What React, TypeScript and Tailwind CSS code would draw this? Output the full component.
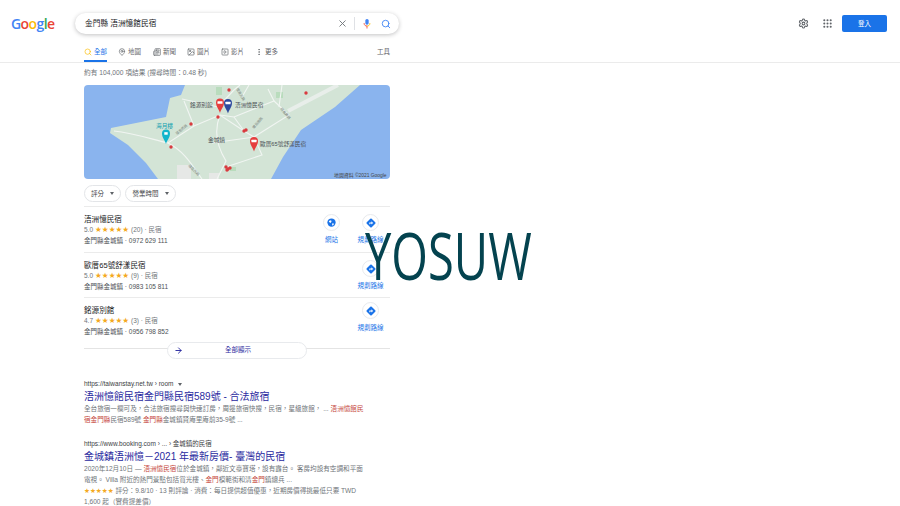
import { ArrowRight, EllipsisVertical, Grip, Image, MapPin, Newspaper, Search, Settings, SquarePlay, X } from "lucide-react";

const cjk = { fontFamily: '"Liberation Sans", "Noto Sans CJK TC", sans-serif' };

const tabs = [
  { label: "地圖", icon: <MapPin size={8} />, width: "w-[35px]" },
  { label: "新聞", icon: <Newspaper size={8} />, width: "w-[34px]" },
  { label: "圖片", icon: <Image size={8} />, width: "w-[34px]" },
  { label: "影片", icon: <SquarePlay size={8} />, width: "w-[34px]" },
  { label: "更多", icon: <EllipsisVertical size={8} />, width: "w-[25px]" },
];

const places = [
  { name: "浯洲憶民宿", score: "5.0", count: "(20)", phone: "0972 629 111", site: true, h: "h-[46px]", iconTop: "mt-[0px]" },
  { name: "歐厝65號舒漾民宿", score: "5.0", count: "(9)", phone: "0983 105 811", site: false, h: "h-[45px]", iconTop: "mt-[0px]" },
  { name: "銘源別館", score: "4.7", count: "(3)", phone: "0956 798 852", site: false, h: "h-[44px]", iconTop: "-mt-[3px]" },
];

function Caret() {
  return <span className="inline-block border-x-[2.5px] border-t-[3px] border-x-transparent border-t-[#5f6368]" />;
}

function Pin({ x, y, color, teal }: { x: number; y: number; color: string; teal?: boolean }) {
  return (
    <g transform={`translate(${x} ${y}) scale(0.85)`}>
      <path d="M0 9.500C-1 5-4.700 2-4.700-3A4.700 4.700 0 0 1 4.700-3C4.700 2 1 5 0 9.500Z" fill={color} />
      {teal ? <rect x="-2" y="-4.500" width="4" height="3" fill="#fff" /> : <rect x="-3" y="-4.500" width="6" height="3" rx="0.6" fill="#fff" />}
    </g>
  );
}

function MapTile() {
  const dots = [[222, 8], [145, 5], [134, 32], [107, 39], [160, 46], [162, 45], [87, 62], [142, 82], [144, 84], [146, 83], [143, 85]];
  const label = { fontSize: 5.7, fill: "#4a4f54" };
  const road = { fontSize: 3.5, fill: "#7b857e" };
  return (
    <svg viewBox="0 0 306 94" className="block w-[306px] h-[94px] rounded-[4px]" style={cjk}>
      <rect width="306" height="94" fill="#8ab4ee" />
      <path d="M101 0L97 10L86 13L82 32L57 37L27 43L26 48L44 60L62 78L74 94H187L199 72L217 45L251 22L276 0Z" fill="#d3e4d6" />
      <path d="M132 2h6v8h-6zM192 7h7v6h-7zM146 82h6v4h-6z" fill="#b9dcbd" />
      <path d="M93 80h14v14H93zM125 88h10v6h-10z" fill="#e6e8e6" />
      <g fill="none" stroke="#f1f5f2" strokeWidth="1.100">
        <path d="M30 46C50 48 70 55 84 58L110 41L136 30L160 46L170 52" />
        <path d="M84 58C100 66 108 80 118 94" />
        <path d="M136 30C130 45 132 60 142 76L133 94" />
        <path d="M98 14L134 22L150 5L156 0" />
        <path d="M128 58L170 52L178 70L142 82" />
        <path d="M136 30L150 32L190 16L205 30L170 52" />
        <path d="M190 16L184 4M100 16L110 41M150 32L160 46M195 22L198 0M165 0L158 12" />
      </g>
      <path d="M204 26L254 0" stroke="#e8eeea" strokeWidth="4" fill="none" />
      <text transform="translate(93 50) rotate(-40)" {...road}>環島西路</text>
      <text transform="translate(170 44) rotate(-50)" {...road}>環島南路</text>
      <text transform="translate(152 4) rotate(60)" {...road}>環島北路</text>
      <text transform="translate(196 24) rotate(50)" {...road}>環島東路</text>
      <text transform="translate(104 81) rotate(45)" {...road}>環島西路</text>
      {dots.map(([x, y]) => (
        <circle key={`${x}-${y}`} cx={x} cy={y} r="1.700" fill="#d93a3f" />
      ))}
      <Pin x={136} y={20} color="#e53e3e" />
      <Pin x={144} y={20.5} color="#2f4a9e" />
      <Pin x={170} y={58.5} color="#e53e3e" />
      <Pin x={82} y={51} color="#12b5cb" teal />
      <text x="106" y="22" {...label}>銘源別館</text>
      <text x="151" y="22" {...label}>浯洲憶民宿</text>
      <text x="72" y="43" fontSize="5.700" fill="#129eaf">海月樓</text>
      <text x="124" y="57" {...label}>金城鎮</text>
      <text x="176" y="61" {...label}>歐厝65號舒漾民宿</text>
      <text x="250" y="92" fontSize="4.900" fill="#444">地圖資料 ©2021 Google</text>
    </svg>
  );
}

function ActionIcon({ kind, label }: { kind: "site" | "route"; label: string }) {
  return (
    <div className="w-[39px] flex flex-col items-center">
      <div className="w-[17px] h-[17px] rounded-full bg-white border border-[#e8eaed] flex items-center justify-center">
        {kind === "site" ? (
          <svg viewBox="0 0 12 12" className="w-[9px] h-[9px]">
            <circle cx="6" cy="6" r="5.500" fill="#1a73e8" />
            <path d="M3 3.500L5.500 3L6 5L4.500 6.500L2.500 5ZM7 7L9.500 7.500L8 10L6.800 9.500Z" fill="#fff" />
          </svg>
        ) : (
          <svg viewBox="0 0 12 12" className="w-[10px] h-[10px]">
            <rect x="1.800" y="1.800" width="8.400" height="8.400" rx="1.200" transform="rotate(45 6 6)" fill="#1a73e8" />
            <path d="M4 7.500V5.500H6.500V4L8.500 6L6.500 7.800V6.500H5V7.500Z" fill="#fff" />
          </svg>
        )}
      </div>
      <span className="mt-[4px] text-[6.500px] leading-[9px] text-[#1a73e8] whitespace-nowrap">{label}</span>
    </div>
  );
}

function PlaceRow({ p }: { p: (typeof places)[number] }) {
  return (
    <div className={`flex justify-between border-t border-[#ebebeb] pt-[7px] ${p.h}`}>
      <div>
        <div className="text-[7.600px] leading-[11px] text-[#202124]">{p.name}</div>
        <div className="text-[6.500px] leading-[10px] text-[#70757a] flex items-center gap-[2px]">
          <span>{p.score}</span>
          <span className="text-[#f4a921] text-[7.600px]" style={{ fontFamily: '"DejaVu Sans", sans-serif' }}>★★★★★</span>
          <span>{p.count} · 民宿</span>
        </div>
        <div className="text-[6.500px] leading-[11px] text-[#4d5156]">金門縣金城鎮 · {p.phone}</div>
      </div>
      <div className={`flex items-start ${p.iconTop}`}>
        {p.site && <ActionIcon kind="site" label="網站" />}
        <ActionIcon kind="route" label="規劃路線" />
      </div>
    </div>
  );
}

function Hit({ children, url, title }: { children: React.ReactNode; url: React.ReactNode; title: string }) {
  return (
    <div>
      <div className="text-[6.500px] leading-[10px] text-[#3c4043] flex items-center gap-[3px]">{url}</div>
      <div className="mt-[1px] text-[10px] leading-[14px] text-[#2a2aa0] whitespace-nowrap">{title}</div>
      <div className="w-[282px] text-[6.600px] leading-[10.700px] text-[#70757a]">{children}</div>
    </div>
  );
}

export default function App() {
  return (
    <div className="relative w-[900px] h-[506px] overflow-hidden bg-white" style={cjk}>
      <header className="h-[46px] flex items-center pt-[1px]">
        <div className="w-[75px] pl-[11px] text-[14px] font-semibold tracking-[-0.6px]" style={{ fontFamily: '"Open Sans", sans-serif' }}>
          <span className="text-[#4285f4]">G</span>
          <span className="text-[#ea4335]">o</span>
          <span className="text-[#fbbc05]">o</span>
          <span className="text-[#4285f4]">g</span>
          <span className="text-[#34a853]">l</span>
          <span className="text-[#ea4335]">e</span>
        </div>
        <div className="w-[324px] h-[21px] rounded-full bg-white shadow-[0_1px_4px_rgba(32,33,36,0.28)] flex items-center pl-[10px] pr-[8px]">
          <span className="flex-1 text-[7.700px] text-[#202124]">金門縣 浯洲憶館民宿</span>
          <X size={11} strokeWidth={2} className="text-[#70757a]" />
          <span className="w-px h-[13px] bg-[#dfe1e5] ml-[6px] mr-[7px]" />
          <svg viewBox="0 0 12 12" className="w-[10px] h-[11px] mr-[9px]">
            <rect x="4" y="0.500" width="4" height="7" rx="2" fill="#4285f4" />
            <path d="M2.500 5.500C2.500 8 4 9 6 9V12" fill="none" stroke="#ea4335" strokeWidth="1" />
            <path d="M9.500 5.500C9.500 8 8 9 6 9" fill="none" stroke="#fbbc05" strokeWidth="1" />
          </svg>
          <Search size={10} strokeWidth={2.200} className="text-[#4285f4]" />
        </div>
        <div className="ml-auto flex items-center pr-[13px]">
          <Settings size={11} strokeWidth={2.200} className="text-[#5f6368]" />
          <Grip size={11} strokeWidth={2.500} className="text-[#5f6368] ml-[13px]" />
          <div className="ml-[9px] w-[45px] h-[17px] rounded-[2px] bg-[#1a73e8] text-white text-[6.500px] flex items-center justify-center">登入</div>
        </div>
      </header>

      <nav className="h-[17px] border-b border-[#ebebeb] pl-[84px] pr-[510px] flex items-start text-[6.500px] text-[#5f6368]">
        <div className="w-[23px] shrink-0 h-[16px] border-b-2 border-[#1a73e8] text-[#1a73e8] flex items-start pt-[1px] gap-[2px] leading-[10px] mr-[11px] whitespace-nowrap">
          <Search size={8} className="text-[#fbbc05] mt-[1px] shrink-0" />
          <span>全部</span>
        </div>
        {tabs.map((t) => (
          <div key={t.label} className={`${t.width} flex items-start pt-[1px] gap-[2px] leading-[10px] whitespace-nowrap`}>
            <span className="mt-[1px]">{t.icon}</span>
            <span>{t.label}</span>
          </div>
        ))}
        <span className="ml-auto pt-[1px] leading-[10px]">工具</span>
      </nav>

      <main className="ml-[84px] w-[306px]">
        <div className="mt-[5px] h-[17px] text-[6.700px] leading-[10px] text-[#70757a]">約有 104,000 項結果 (搜尋時間：0.48 秒)</div>
        <MapTile />
        <div className="mt-[6px] flex gap-[4px] text-[6.500px] text-[#3c4043]">
          <div className="h-[17px] w-[37px] rounded-full border border-[#e3e5e8] flex items-center justify-center gap-[6px]">評分 <Caret /></div>
          <div className="h-[17px] w-[51px] rounded-full border border-[#e3e5e8] flex items-center justify-center gap-[6px]">營業時間 <Caret /></div>
        </div>
        <div className="mt-[4px]">
          {places.map((p) => (
            <PlaceRow key={p.name} p={p} />
          ))}
        </div>
        <div className="h-[18px] flex items-center relative">
          <div className="absolute left-0 right-0 top-[7px] h-px bg-[#e4e4e4]" />
          <div className="relative ml-[83px] w-[140px] h-[17px] rounded-full bg-white border border-[#e8eaed] flex items-center pl-[6px]">
            <ArrowRight size={9} strokeWidth={2.500} className="text-[#2a2aa0]" />
            <span className="ml-[42px] text-[6.500px] text-[#2a2aa0]">全部顯示</span>
          </div>
        </div>

        <div className="mt-[20px]">
          <Hit
            url={<>https://taiwanstay.net.tw › room <span className="ml-[2px]"><Caret /></span></>}
            title="浯洲憶館民宿金門縣民宿589號 - 合法旅宿"
          >
            全台旅宿一欄可及，合法旅宿搜尋與快速訂房，周邊旅宿快搜，民宿，星級旅館， ... <span className="text-[#c5453a]">浯洲憶館民宿金門縣</span>民宿589號 <span className="text-[#c5453a]">金門縣</span>金城鎮賢庵里庵前35-9號 ...
          </Hit>
        </div>
        <div className="mt-[14px]">
          <Hit url={<>https://www.booking.com › ... › 金城鎮的民宿</>} title="金城鎮浯洲憶－2021 年最新房價- 臺灣的民宿">
            2020年12月10日 — <span className="text-[#c5453a]">浯洲憶民宿</span>位於金城鎮，鄰近文臺寶塔，設有露台。 客房均設有空調和平面電視。 Villa 附近的熱門景點包括賞光樓、<span className="text-[#c5453a]">金門</span>模範街和清<span className="text-[#c5453a]">金門</span>鎮總兵 ...
            <br />
            <span className="text-[#f4a921]" style={{ fontFamily: '"DejaVu Sans", sans-serif' }}>★★★★★</span> 評分：9.8/10 · 13 則評論 · 消費：每日提供超值優惠，近期房價得挑最低只要 TWD 1,600 起（實費提差價）
          </Hit>
        </div>
      </main>

      <div
        className="absolute left-[365px] top-[210px] origin-left scale-x-[0.725] text-[65px] font-medium leading-[90px] text-[#04434f] whitespace-nowrap"
        style={{ fontFamily: '"Open Sans", sans-serif' }}
      >
        YOSUW
      </div>
    </div>
  );
}
